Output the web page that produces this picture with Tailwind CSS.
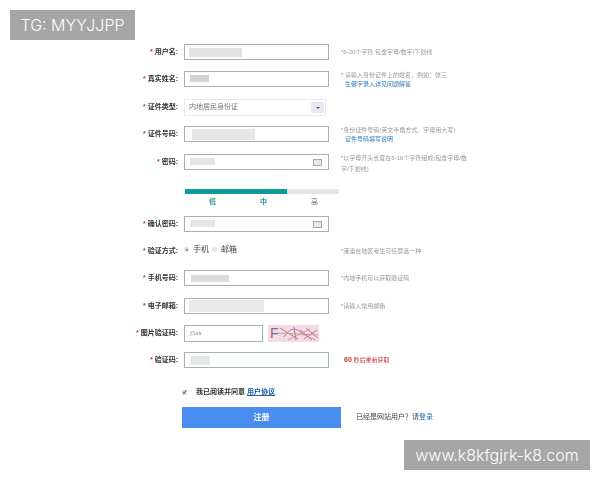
<!DOCTYPE html>
<html lang="zh">
<head>
<meta charset="utf-8">
<script src="https://cdn.jsdelivr.net/npm/@tailwindcss/browser@4"></script>
</head>
<body class="bg-white">
<div class="relative w-[600px] h-[480px] overflow-hidden bg-white font-['Liberation_Sans','Noto_Sans_CJK_SC',sans-serif]">
  <div class="blur-[0.45px] flex flex-col pt-[44px] text-[7px]">

    <div class="flex h-[16px] items-center">
      <div class="w-[178px] text-right font-bold text-[#333] shrink-0"><span class="text-[#c8385a]">* </span>用户名:</div>
      <div class="ml-[6px] w-[145px] h-full border border-[#a3b5a3] shrink-0 flex items-center pl-[4px]"><div class="w-[53px] h-[9px] bg-[#e4e4e4]"></div></div>
      <div class="ml-[12px] text-[6px] text-[#999]">*6-20个字符,包含字母/数字/下划线</div>
    </div>

    <div class="flex h-[16px] items-center mt-[11px]">
      <div class="w-[178px] text-right font-bold text-[#333] shrink-0"><span class="text-[#c8385a]">* </span>真实姓名:</div>
      <div class="ml-[6px] w-[145px] h-full border border-[#a3b5a3] shrink-0 flex items-center pl-[5px]"><div class="w-[19px] h-[7px] bg-[#d4d4d8] -mt-[2px]"></div></div>
      <div class="ml-[12px] text-[6px] text-[#999] leading-[8.5px] mt-[1px]">* 请输入身份证件上的姓名，例如：张三<br><span class="ml-[4px] text-[#2f7fb8]">生僻字录入详见问题解答</span></div>
    </div>

    <div class="flex h-[17px] items-center mt-[12px]">
      <div class="w-[178px] text-right font-bold text-[#333] shrink-0"><span class="text-[#c8385a]">* </span>证件类型:</div>
      <div class="ml-[6px] w-[142px] h-full border border-[#e8e8ee] shrink-0 flex items-center justify-between pl-[4px] pr-[1px] text-[#777]">内地居民身份证
        <div class="w-[13px] h-[11px] bg-[#e6e8f2] flex items-center justify-center"><div class="w-0 h-0 border-x-[2px] border-x-transparent border-t-[2px] border-t-[#556]"></div></div>
      </div>
    </div>

    <div class="flex h-[16px] items-center mt-[10px]">
      <div class="w-[178px] text-right font-bold text-[#333] shrink-0"><span class="text-[#c8385a]">* </span>证件号码:</div>
      <div class="ml-[6px] w-[145px] h-full border border-[#a3b5a3] shrink-0 flex items-center pl-[7px]"><div class="w-[63px] h-[11px] bg-[#e6e6e6]"></div></div>
      <div class="ml-[12px] text-[6px] text-[#999] leading-[8.5px] mt-[1px]">*身份证件号码(英文半角方式、字母用大写)<br><span class="ml-[4px] text-[#2f7fb8]">证件号码填写说明</span></div>
    </div>

    <div class="flex h-[16px] items-center mt-[12px]">
      <div class="w-[178px] text-right font-bold text-[#333] shrink-0"><span class="text-[#c8385a]">* </span>密码:</div>
      <div class="ml-[6px] w-[145px] h-full border border-[#a3b5a3] shrink-0 flex items-center justify-between pl-[5px] pr-[6px]">
        <div class="w-[25px] h-[7px] bg-[#e6e6e6] -mt-[1px]"></div>
        <div class="w-[9px] h-[7px] border border-[#aaa] bg-[#e8e8e8]"></div>
      </div>
      <div class="ml-[12px] w-[130px] text-[6px] text-[#999] leading-[11px] mt-[4px]">*以字母开头长度在6-16个字符组成(包含字母/数字/下划线)</div>
    </div>

    <div class="ml-[185px] w-[154px] h-[5px] bg-[#e6e6e6] mt-[19px]"><div class="w-[102px] h-full bg-[#0e9a97]"></div></div>
    <div class="ml-[185px] w-[154px] flex mt-[4px] h-[8px] items-center font-bold text-[#2b9aa0]">
      <span class="ml-[24px]">低</span><span class="ml-[44px]">中</span><span class="ml-[44px] font-normal text-[#777]">高</span>
    </div>

    <div class="flex h-[16px] items-center mt-[10px]">
      <div class="w-[178px] text-right font-bold text-[#333] shrink-0"><span class="text-[#c8385a]">* </span>确认密码:</div>
      <div class="ml-[6px] w-[145px] h-full border border-[#a3b5a3] shrink-0 flex items-center justify-between pl-[5px] pr-[6px]">
        <div class="w-[25px] h-[7px] bg-[#e6e6e6] -mt-[1px]"></div>
        <div class="w-[9px] h-[7px] border border-[#aaa] bg-[#e8e8e8]"></div>
      </div>
    </div>

    <div class="flex h-[16px] items-center mt-[11px]">
      <div class="w-[178px] text-right font-bold text-[#333] shrink-0"><span class="text-[#c8385a]">* </span>验证方式:</div>
      <div class="ml-[6px] w-[145px] shrink-0 flex items-center text-[8px] text-[#444] -mt-[3px]">
        <div class="w-[5px] h-[5px] rounded-full bg-[#ddd] flex items-center justify-center mr-[4px]"><div class="w-[2px] h-[2px] rounded-full bg-[#888]"></div></div>手机
        <div class="w-[5px] h-[5px] rounded-full bg-[#e8e8e8] ml-[3px] mr-[4px]"></div>邮箱
      </div>
      <div class="ml-[12px] text-[6px] text-[#999]">*港澳台地区考生可任意选一种</div>
    </div>

    <div class="flex h-[16px] items-center mt-[11px]">
      <div class="w-[178px] text-right font-bold text-[#333] shrink-0"><span class="text-[#c8385a]">* </span>手机号码:</div>
      <div class="ml-[6px] w-[145px] h-full border border-[#a3b5a3] shrink-0 flex items-center pl-[6px]"><div class="w-[38px] h-[7px] bg-[#dcdcdc]"></div></div>
      <div class="ml-[12px] text-[6px] text-[#999]">*内地手机可以获取验证码</div>
    </div>

    <div class="flex h-[16px] items-center mt-[12px]">
      <div class="w-[178px] text-right font-bold text-[#333] shrink-0"><span class="text-[#c8385a]">* </span>电子邮箱:</div>
      <div class="ml-[6px] w-[145px] h-full border border-[#a3b5a3] shrink-0 flex items-center pl-[4px]"><div class="w-[75px] h-[12px] bg-[#e9e9e9]"></div></div>
      <div class="ml-[12px] text-[6px] text-[#999]">*请输入常用邮箱</div>
    </div>

    <div class="flex h-[17px] items-center mt-[11px]">
      <div class="w-[178px] text-right font-bold text-[#333] shrink-0"><span class="text-[#c8385a]">* </span>图片验证码:</div>
      <div class="ml-[6px] w-[79px] h-full border border-[#a3b5a3] shrink-0 flex items-center pl-[5px] text-[#888] font-['Liberation_Serif',serif]">j5sx</div>
      <svg class="ml-[5px] shrink-0" width="51" height="17" viewBox="0 0 51 17">
        <rect width="51" height="17" fill="#f4dbe4"/>
        <text x="2" y="13" font-size="14" fill="#8a6a8a" font-family="Liberation Sans">F</text>
        <path d="M12 3L30 14M16 12C22 2 28 2 36 10M26 2L28 15M32 5L44 15M36 14L49 5M38 3L50 13" stroke="#a878a8" stroke-width="1" fill="none"/>
        <path d="M10 8L50 10M20 15L42 4M34 9L48 15" stroke="#c88a70" stroke-width=".7" fill="none"/>
      </svg>
    </div>

    <div class="flex h-[16px] items-center mt-[10px]">
      <div class="w-[178px] text-right font-bold text-[#333] shrink-0"><span class="text-[#c8385a]">* </span>验证码:</div>
      <div class="ml-[6px] w-[145px] h-full border border-[#a3b5a3] shrink-0 flex items-center pl-[5px]"><div class="w-[20px] h-[9px] bg-[#e6e6e6]"></div></div>
      <div class="ml-[15px] text-[6px] text-[#c9303a]"><b class="text-[7px]">60</b> 秒后重新获取</div>
    </div>

    <div class="flex items-center h-[8px] mt-[20px] ml-[182px] font-bold text-[#333]">
      <div class="w-[5px] h-[5px] bg-[#ddd] flex items-center justify-center text-[5px] leading-none text-[#333] mr-[9px]">✓</div>
      我已阅读并同意<span class="ml-[2px] text-[#1f5fa8] underline">用户协议</span>
    </div>

    <div class="flex items-center mt-[11px] ml-[182px]">
      <div class="w-[159px] h-[21px] bg-[#4a8df0] text-white text-[8px] font-bold flex items-center justify-center">注册</div>
      <div class="ml-[15px] text-[7px] text-[#444]">已经是网站用户？请<span class="text-[#1f6fb0]">登录</span></div>
    </div>
  </div>

  <div class="absolute left-[10px] top-[10px] w-[125px] h-[30px] bg-[#a6a6a6] text-white text-[16px] flex items-center justify-center font-['Inter',sans-serif] font-light">TG: MYYJJPP</div>
  <div class="absolute left-[404px] top-[440px] w-[186px] h-[30px] bg-[#a6a6a6] text-white text-[16px] flex items-center justify-center font-['Inter',sans-serif] font-light">www.k8kfgjrk-k8.com</div>
</div>
</body>
</html>
